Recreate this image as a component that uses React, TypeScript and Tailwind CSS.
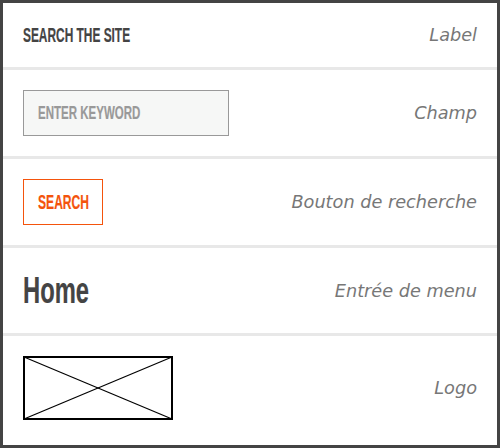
import React from "react";

function Cond({ children, className }: { children: React.ReactNode; className: string }) {
  return (
    <span className={`inline-block whitespace-nowrap font-['Liberation_Sans',sans-serif] font-bold origin-left [-webkit-text-stroke:0.2px_currentColor] ${className}`}>
      {children}
    </span>
  );
}

function Note({ children }: { children: React.ReactNode }) {
  return (
    <span className="font-['DejaVu_Sans',sans-serif] italic text-[17.7px] leading-6 text-[#777]">{children}</span>
  );
}

export default function App() {
  return (
    <div className="w-[500px] h-[448px] border-[3px] border-[#444] bg-white flex flex-col overflow-hidden">
      <div className="flex items-center justify-between px-5 h-[67px] border-b-[3px] border-[#e8e8e8]">
        <Cond className="text-[19.5px] leading-6 text-[#444] [transform:scaleX(0.61)]">SEARCH THE SITE</Cond>
        <Note>Label</Note>
      </div>
      <div className="flex items-center justify-between px-5 h-[89px] border-b-[3px] border-[#e8e8e8]">
        <div className="w-[206px] h-[46px] border border-[#999] bg-[#f6f7f6] flex items-center pl-[14px]">
          <Cond className="text-[18px] leading-6 text-[#999] [transform:scaleX(0.64)]">ENTER KEYWORD</Cond>
        </div>
        <Note>Champ</Note>
      </div>
      <div className="flex items-center justify-between px-5 h-[89px] border-b-[3px] border-[#e8e8e8]">
        <div className="w-[80px] h-[46px] border border-[#f4530c] flex items-center pl-[14px]">
          <Cond className="text-[19.5px] leading-6 text-[#f4530c] [transform:scaleX(0.62)]">SEARCH</Cond>
        </div>
        <Note>Bouton de recherche</Note>
      </div>
      <div className="flex items-center justify-between px-5 h-[88px] border-b-[3px] border-[#e8e8e8]">
        <Cond className="text-[36px] leading-10 text-[#444] [transform:scaleX(0.66)]">Home</Cond>
        <Note>Entrée de menu</Note>
      </div>
      <div className="flex items-start justify-between px-5 pt-5">
        <svg width="150" height="64" viewBox="0 0 150 64" className="block">
          <rect x="1" y="1" width="148" height="62" fill="none" stroke="#000" strokeWidth="2" />
          <line x1="1" y1="1" x2="149" y2="63" stroke="#000" strokeWidth="1.2" />
          <line x1="149" y1="1" x2="1" y2="63" stroke="#000" strokeWidth="1.2" />
        </svg>
        <div className="h-[64px] flex items-center">
          <Note>Logo</Note>
        </div>
      </div>
    </div>
  );
}
